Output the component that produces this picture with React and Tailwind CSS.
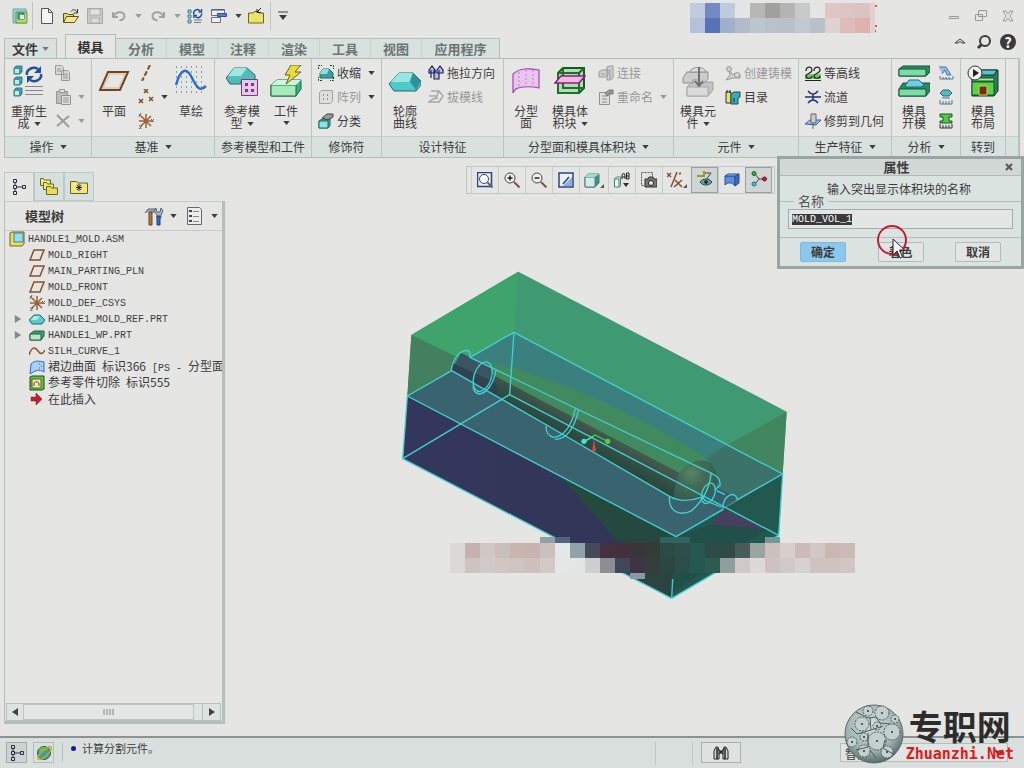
import React, { useEffect, useRef } from 'react';

const Caret = ({ className = 'text-[#3c3c3c]' }) => (
  <svg viewBox="0 0 8 5" className={`w-[7px] h-[4px] shrink-0 inline-block ${className}`}>
    <path d="M0 0h8L4 5z" fill="currentColor" />
  </svg>
);

const Icon = ({ size = 'w-4 h-4', box = 16, children }) => (
  <svg viewBox={`0 0 ${box} ${box}`} className={`${size} shrink-0`} fill="none" stroke="#3c3c3c">
    {children}
  </svg>
);

const Big = ({ children }) => <Icon size="w-8 h-8" box={32}>{children}</Icon>;

/* ---- quick access icons ---- */
const AppIcon = () => (
  <Icon>
    <path d="M1 1h13v14H1z" fill="#8fd0dc" stroke="#6aa6a6" />
    <path d="M4 4h11v11H4z" fill="#b9d86a" stroke="#6f9a3c" />
    <path d="M6 5h6v6H6z" fill="#48a0a8" stroke="#2e7478" />
    <path d="M8 7h4v4H8z" fill="#d6eef0" stroke="none" />
  </Icon>
);
const NewIcon = () => <Icon><path d="M2.500 .5h7l4 4v11h-11zM9.500 .5v4h4" fill="#f4f4f4" stroke="#555" /></Icon>;
const OpenIcon = () => (
  <Icon>
    <path d="M.5 14.500v-9h4l1 1h5v2" fill="#e4d96a" stroke="#5c5420" />
    <path d="M.5 14.500l3-6h12l-4 6z" fill="#f0e98a" stroke="#5c5420" />
    <path d="M8 3.500c2-3 5-2 6 1M14.500 1v4h-4" stroke="#333" />
  </Icon>
);
const SaveIcon = () => (
  <Icon>
    <path d="M.5 .5h15v15H.5z" fill="#c9c9c9" stroke="#a8a8a8" />
    <path d="M3 1h10v6H3z" fill="#e2e2e2" stroke="#b0b0b0" />
    <path d="M4 10h8v5H4z" fill="#dcdcdc" stroke="#b0b0b0" />
  </Icon>
);
const UndoIcon = () => <Icon><path d="M2 4v5h5M2.500 8.500C5 3 13 3 13.500 8c0 3-2 4-5 4.500" stroke="#a3a3a3" strokeWidth="2" /></Icon>;
const RedoIcon = () => <Icon><path d="M14 4v5H9M13.500 8.500C11 3 3 3 2.500 8c0 3 2 4 5 4.500" stroke="#a3a3a3" strokeWidth="2" /></Icon>;
const RegenSmall = () => (
  <Icon>
    <path d="M1 2h3v3H1zM1 7h3v3H1zM1 12h3v3H1z" fill="#8fdde0" stroke="#3c7f86" />
    <path d="M7 6.500a3.500 3.500 0 016-3.500M14.500 1v3h-3M14.500 5.500a3.500 3.500 0 01-6 3M7 10V7.500h3" stroke="#20509c" strokeWidth="1.500" />
    <path d="M7 12h8M7 14.500h7" stroke="#777" />
  </Icon>
);
const WindowsIcon = () => (
  <Icon>
    <path d="M.5 1.500h13v6H.5z" fill="#f0f0f0" stroke="#6b7080" />
    <path d="M6.500 5.500h9v3h-9z" fill="#5a80c8" stroke="#37508c" />
    <path d="M.5 14.500v-5h9v5z" fill="#f0f0f0" stroke="#6b7080" />
    <path d="M1 2h12" stroke="#37508c" />
  </Icon>
);
const CloseFolder = () => (
  <Icon>
    <path d="M.5 15v-10h5l1-1.500h4l1 1.500h4v10z" fill="#ece26a" stroke="#6c6424" />
    <path d="M13 0L9 4M9 1v3.500h4" stroke="#222" />
  </Icon>
);

/* ---- large ribbon icons ---- */
const RegenIcon = () => (
  <Big>
    <path d="M1 3l2-2h6v6l-2 2H1zM1 14l2-2h6v6l-2 2H1zM1 25l2-2h6v6l-2 2H1z" fill="#3c9ca4" stroke="#3c7f86" />
    <path d="M1.500 3.500h5v5h-5zM1.500 14.500h5v5h-5zM1.500 25.500h5v5h-5z" fill="#b8f0f0" stroke="#4c8f96" />
    <path d="M14 10a7 6 0 0111-6M28 9a7 6 0 01-11 6" stroke="#20509c" strokeWidth="2.500" />
    <path d="M28 1v7h-7zM14 18v-7h7z" fill="#20509c" stroke="none" />
    <path d="M12 21.500h18M12 25.500h18M12 29.500h18" stroke="#888" />
  </Big>
);
const PlaneIcon = () => (
  <Big>
    <path d="M10 7h20l-8 18H2z" stroke="#6b4420" strokeWidth="2" />
    <path d="M12 9h15l-6 14H5z" stroke="#d8b890" />
  </Big>
);
const SketchIcon = () => (
  <Big>
    {[2, 7, 12, 17, 22, 27].map((y) => (
      <path key={y} d={`M1 ${y}h30`} stroke="#3a4a80" strokeWidth="1" strokeDasharray="1 4" />
    ))}
    <path d="M1 20C6 2 12 3 17 13s8 14 14 8" stroke="#2a70c8" strokeWidth="2.500" />
  </Big>
);
const RefModelIcon = () => (
  <Big>
    <path d="M0 13L8 3h13l8 7v6H15v3H4z" fill="#52bcbc" stroke="#22686c" />
    <path d="M8 3h13l-6 8H2z" fill="#a0e8e4" stroke="none" />
    <path d="M15.500 14.500h16v16h-16z" fill="#e6c8e8" stroke="#7a3a80" />
    <path d="M19 18h3v3h-3zM25 18h3v3h-3zM19 24h3v3h-3zM25 24h3v3h-3z" fill="#7a3a80" stroke="none" />
  </Big>
);
const WorkIcon = () => (
  <Big>
    <path d="M1 20l6-5h24v9l-5 7H1z" fill="#3cae80" stroke="#1e6848" />
    <path d="M1 20h25v11H1z" fill="#a4ecb8" stroke="#1e6848" />
    <path d="M1 20l6-5h24l-5 5z" fill="#d0f4dc" stroke="none" />
    <path d="M21 0h10l-6 7h6L16 19l4-9h-5z" fill="#e8dc3c" stroke="#6c6418" />
  </Big>
);
const SilhouetteIcon = () => (
  <Big>
    <path d="M0 19L10 8h14l8 8v4l-5 6H5z" fill="#50c8c8" stroke="#1d6c74" />
    <path d="M10 8h14l-4 9H2z" fill="#96e6e2" stroke="none" />
    <path d="M24 8l8 8-5 9-6-8z" fill="#2c9498" stroke="none" />
  </Big>
);
const PartSurfIcon = () => (
  <Big>
    <path d="M3 9C10 3 18 3 29 5v18c-9-2-17-1-21 0-3 1-4 2-5 5z" fill="#e8c4ee" stroke="#a048b0" strokeWidth="1.200" />
    <path d="M9 7v15M16 5v17M23 5v17" stroke="#c47ccc" strokeDasharray="2 2" />
  </Big>
);
const VolumeIcon = () => (
  <Big>
    <path d="M4 8l5-5h21v20l-5 5H4z" fill="#b8d8bc" stroke="#155c20" strokeWidth="2" />
    <path d="M4 8h21v20H4zM25 8l5-5M9 3v20h21" stroke="#1c7028" strokeWidth="2" />
    <path d="M1 18l6-7h24l-6 7z" fill="#f0b8e4" stroke="#8a2078" strokeWidth="1.500" />
  </Big>
);
const MoldCompIcon = () => (
  <Big>
    <path d="M5 22l5-5h21v8l-5 6H5z" fill="#c4c4c4" stroke="#a0a0a0" />
    <path d="M5 22h21v9H5z" fill="#dadada" stroke="#a8a8a8" />
    <path d="M1 13l4-6h21v7l-4 4H17v-3h-6v3H1z" fill="#cccccc" stroke="#909090" />
    <path d="M8 7c0-5 14-7 16 0z" fill="#dedede" stroke="#909090" />
    <path d="M17 2v18M13 16l4 5 4-5" stroke="#707070" strokeWidth="2" />
  </Big>
);
const MoldOpenIcon = () => (
  <Big>
    <path d="M1 4l4-3h27v6l-4 4H1z" fill="#2f8a60" stroke="#155038" />
    <path d="M1 4h27v7H1z" fill="#7cdca4" stroke="#155038" />
    <path d="M1 24l4-6h27v8l-4 5H1z" fill="#2f8a60" stroke="#155038" />
    <path d="M1 24h27v7H1z" fill="#7cdca4" stroke="#155038" />
    <path d="M7 21l4-6h10l5 5-3 2H9z" fill="#6cd0e0" stroke="#1c6c80" />
  </Big>
);
const MoldLayoutIcon = () => (
  <Big>
    <path d="M5 12l4-7h22v21l-4 5H5z" fill="#2c7c58" stroke="#123828" />
    <path d="M12 5h18l-3 5H12z" fill="#58c4d4" stroke="#123828" />
    <path d="M5 17h22v13H5z" fill="#5cd04c" stroke="#125820" />
    <path d="M12 21h8v9h-8z" fill="#702c1c" stroke="#e8d040" />
    <path d="M5 13h22v3H5z" fill="#a8e8a0" stroke="#125820" />
    <circle cx="8" cy="8" r="7" fill="#f0f0f0" stroke="#333" />
    <path d="M6 4l6 4-6 4z" fill="#222" stroke="none" />
  </Big>
);

/* ---- small ribbon icons ---- */
const CopyIcon = () => <Icon><path d="M.5 .5h6l2 2v7h-8zM6.500 5.500h6l2 2v8h-8zM8 9h5M8 11h5M8 13h5M2 4h4M2 6h4" fill="#dadada" stroke="#9a9a9a" /></Icon>;
const PasteIcon = () => <Icon><path d="M1.500 2.500h11v12h-11z" fill="#bcbcbc" stroke="#959595" /><path d="M4.500 .5h5v3h-5zM6.500 6.500h9v9h-9zM8 9h6M8 11h6M8 13h6" fill="#e0e0e0" stroke="#959595" /></Icon>;
const DeleteIcon = () => <Icon><path d="M2 2l12 12M14 3L2 13" stroke="#9c9c9c" strokeWidth="2" /></Icon>;
const AxisIcon = () => <Icon><path d="M12 0L4 16" stroke="#84502c" strokeWidth="2" strokeDasharray="5 2" /></Icon>;
const PointIcon = () => <Icon><path d="M6 0l4 4M10 0L6 4M1 10l4 4M5 10l-4 4M11 8l4 4M15 8l-4 4" stroke="#84502c" strokeWidth="1.500" /></Icon>;
const CsysIcon = () => (
  <Icon>
    <path d="M1 8h14M8 1v14M3 3l10 10M13 3L3 13" stroke="#9a6038" strokeWidth="1.500" />
    <path d="M1 1l2 2M3 0L1 4M13 6l3 3M16 6l-3 3M1 13h3l-3 3h3" stroke="#666" />
  </Icon>
);
const ShrinkIcon = () => (
  <Icon>
    <path d="M2 8l3-4h6l4 4v5H2z" fill="#3c9ca0" stroke="#22686c" />
    <path d="M2 8l3-4h6l-2 5H2z" fill="#8ce0dc" stroke="none" />
    <path d="M.5 4V.5H4M12 .5h3.500V4M15.500 12v3.500H12M4 15.500H.5V12" stroke="#333" strokeDasharray="2 1" />
  </Icon>
);
const PatternIcon = () => <Icon><path d="M1.500 3.500l2-2h11v11l-2 2h-11z" fill="#dedede" stroke="#a4a4a4" /><path d="M5 6h1M9 6h1M5 10h1M9 10h1" stroke="#909090" strokeWidth="2" /></Icon>;
const ClassifyIcon = () => <Icon><path d="M1 8l3-2h8v7l-2 2H1z" fill="#3ca8a0" stroke="#22686c" /><path d="M1 8h9v7H1z" fill="#88e4dc" stroke="#22686c" /><path d="M4 5l5-4h6v3l-5 3z" fill="#989898" stroke="#444" /></Icon>;
const DragDirIcon = () => <Icon><path d="M3 5v8M6 5v9h5V5M1 5l3-4 3 4v3H1zM9 5l3-4 3 4v3H9z" fill="#b8b8e4" stroke="#20205c" strokeWidth="1.200" /></Icon>;
const DraftIcon = () => <Icon><path d="M3 2h8l4 5-4 6H1l4-3 5-1M1 7h8M11 2L8 9" stroke="#a8a8a8" strokeWidth="1.500" /></Icon>;
const ConnectIcon = () => <Icon><path d="M1 7l3-2h6v5l-3 2H1zM9 2l3-1h3v12l-3 2H9z" fill="#d0d0d0" stroke="#989898" /><path d="M12 4v10M3 9h4" stroke="#989898" /></Icon>;
const RenameIcon = () => <Icon><path d="M1.500 3.500h10v12h-10zM4 7h5M4 10h5M4 13h5" fill="#e0e0e0" stroke="#909090" /><path d="M7 4l4-3h4v4h-3l-3 2z" fill="#999" stroke="#777" /></Icon>;
const CastIcon = () => <Icon><path d="M4 5l3 4h8v4H8L1 15l4-5z" fill="#d0d0d0" stroke="#999" /><circle cx="4" cy="4" r="2.500" fill="#d0d0d0" stroke="#999" /><circle cx="12" cy="10" r="2.500" fill="#dcdcdc" stroke="#999" /></Icon>;
const CatalogIcon = () => (
  <Icon>
    <path d="M1 3h5v11H1z" fill="#e8e070" stroke="#333" />
    <path d="M6 5l3-2h6v5l-2 1v6H6z" fill="#40a8b0" stroke="#1c4c54" />
    <path d="M2 1v3M5 1v3M9 9v4" stroke="#222" />
  </Icon>
);
const ContourIcon = () => (
  <Icon>
    <path d="M0 9h16v5H0z" fill="#70c860" stroke="none" />
    <path d="M1 6c0-5 6-5 6-1s-6 3-6 6 6 3 6 0M9 6c0-5 6-5 6-1s-6 3-6 6 6 3 6 0M0 15.500h16" stroke="#222" strokeWidth="1.200" />
  </Icon>
);
const RunnerIcon = () => <Icon><path d="M0 8h16M3 2c3 4 7 4 10 0M3 14c3-4 7-4 10 0M8 5v6" stroke="#20306c" strokeWidth="1.500" /></Icon>;
const TrimIcon = () => <Icon><path d="M0 11l5-4h11l-5 5z" fill="#a0c0ec" stroke="#3a5c9c" /><path d="M6 1h5v9H6zM8 10v6" fill="#cccccc" stroke="#666" /></Icon>;
const DraftCheck = () => <Icon><path d="M1 2h7l5 8H9L7 5 4 9" fill="#98bce4" stroke="#4a74b0" /><path d="M2 11v3h13v-3M5 12v2M8 12v2M11 12v2" stroke="#56748c" /></Icon>;
const ThickCheck = () => <Icon><path d="M2 4l3-3h6l3 3-3 3H5z" fill="#58b8c0" stroke="#246870" /><path d="M2 11v4h12v-4M5 12v3M8 12v3M11 12v3M4 9h8" stroke="#56748c" /></Icon>;
const InterfCheck = () => <Icon><path d="M2 1h12v3H11v4h3v2H2V8h3V4H2z" fill="#58c848" stroke="#125820" /><path d="M2 11v4h12v-4M5 12v3M8 12v3M11 12v3" stroke="#333" /></Icon>;

/* ---- tree icons ---- */
const TreeTabIcon = () => <Icon><path d="M2.500 .5h3v3h-3zM2.500 6.500h3v3h-3zM2.500 12.500h3v3h-3zM11.500 6.500h3v3h-3zM4 4v2M4 10v2M6 8h5" stroke="#2a2c44" /></Icon>;
const FoldersIcon = () => (
  <Icon size="w-5 h-5" box={20}>
    <path d="M1.500 8.500v-7h3l1 1.500h6v5.500z" fill="#f0e880" stroke="#6c6424" />
    <path d="M4.500 12.500v-7h3l1 1.500h6v5.500z" fill="#f0e880" stroke="#6c6424" />
    <path d="M7.500 17.500v-8h4l1 1.500h6v6.500z" fill="#e8dc60" stroke="#6c6424" />
  </Icon>
);
const FavIcon = () => (
  <Icon size="w-5 h-5" box={20}>
    <path d="M1.500 16.500v-12h6l1.500 1.500h9.500v10.500z" fill="#f0e878" stroke="#6c6424" />
    <path d="M10 7v7M7 10.500h6M8 8l4 5M12 8l-4 5" stroke="#20206c" />
  </Icon>
);
const ToolsIcon = () => (
  <Icon size="w-5 h-5" box={20}>
    <path d="M1 7l3-4h7v3H7" fill="#9ab" stroke="#567" />
    <path d="M5 6h3v13H5z" fill="#b07840" stroke="#6c4420" />
    <path d="M12 2l1 4h3l1-4 2 3-2 4v3h-4V9l-3-4z" fill="#a8b8c4" stroke="#567" />
    <path d="M13 10h3v9h-3z" fill="#3868c0" stroke="#204080" />
  </Icon>
);
const SettingsIcon = () => <Icon size="w-5 h-5" box={20}><path d="M2.500 1.500h12l2 2v15h-14z" fill="#ececec" stroke="#667" /><path d="M4 5h3M4 10h3M4 15h3" stroke="#444" strokeWidth="2" /><path d="M8 5.500h6M8 10.500h6M8 15.500h6" stroke="#888" /></Icon>;
const AsmIcon = () => <Icon><path d="M1 2l2-1h12v12l-2 2H1z" fill="#e8dc60" stroke="#6c6424" /><path d="M5 2h9v9H5z" fill="#98dcec" stroke="#3c8494" /></Icon>;
const TreePlane = () => <Icon><path d="M5 3h10l-4 10H1z" stroke="#84502c" strokeWidth="1.500" /></Icon>;
const RefPart = () => <Icon><path d="M0 9l5-5h6l5 5-3 4H3z" fill="#58c8c8" stroke="#22686c" /><path d="M5 5h6l-3 4H2z" fill="#a8ece8" stroke="none" /></Icon>;
const WpPart = () => <Icon><path d="M1 7l4-3h10v5l-3 4H1z" fill="#3c9c78" stroke="#245c48" /><path d="M1 7h11v6H1z" fill="#b4e8c8" stroke="#245c48" /></Icon>;
const CurveIcon = () => <Icon><path d="M0 12C3 3 6 4 9 8s5 3 7-1" stroke="#84502c" strokeWidth="1.500" /></Icon>;
const SkirtIcon = () => <Icon><path d="M2 5c4-4 8-3 13-2v10c-5-3-8-2-14 2z" fill="#a8d0f4" stroke="#3a68b0" /><path d="M10 5h1M12 7h1M10 9h1" stroke="#3a68b0" /></Icon>;
const CutIcon = () => <Icon><path d="M1 2l2-1h12v13l-2 1H1z" fill="#58c848" stroke="#184c18" /><path d="M3 4h9v9H3z" fill="#e8f0b0" stroke="#6c5424" /><path d="M5 11V9c0-3 5-3 5 0v2" stroke="#6c3420" /></Icon>;
const InsertIcon = () => <Icon><path d="M2 6h5V2l6 6-6 6v-4H2z" fill="#c02030" stroke="#801018" strokeWidth=".5" /></Icon>;

/* ---- graphics toolbar icons ---- */
const Lens = ({ sign }) => (
  <Icon>
    <circle cx="6" cy="6" r="5" fill="#f2f2f2" stroke="#444" />
    <path d="M10 10l5.500 5.500" stroke="#7a5838" strokeWidth="2" />
    <path d={sign} stroke="#222" strokeWidth="1.500" />
  </Icon>
);
const FitIcon = () => (
  <Icon>
    <path d="M.5 .5h14v14H.5z" fill="#e4ecf8" stroke="#2c4480" strokeWidth="1.500" />
    <circle cx="7" cy="7" r="4.500" fill="#fff" stroke="#445" />
    <path d="M10.500 10.500l5 5" stroke="#665" strokeWidth="2" />
  </Icon>
);
const RepaintIcon = () => <Icon><path d="M1 1h14v14H1z" fill="#e8f0fc" stroke="#2c4480" strokeWidth="1.500" /><path d="M14 14V5L5 14z" fill="#88b0e0" stroke="none" /><path d="M5 12l6-7" stroke="#345" strokeWidth="1.500" /></Icon>;
const ShadeIcon = () => <Icon><path d="M1 5l3-3h11v9l-4 4H1z" fill="#3c948c" stroke="#4c7c78" /><path d="M1 5h10v10H1z" fill="#d4ece8" stroke="#4c7c78" /><path d="M1 5l3-3h11l-4 3z" fill="#a0dcd4" stroke="none" /></Icon>;
const SavedViewIcon = () => (
  <Icon>
    <path d="M.5 7l2-2h4v8l-1 2H.5zM.5 7H5v8" fill="#e8f4f4" stroke="#4c7c78" />
    <path d="M8 7V3l1.500-2L11 3v4M8 5h3M12.500 1v6h2.500V1zM12.500 4H15" stroke="#222" />
    <path d="M9 11h6l-3 4z" fill="#333" stroke="none" />
  </Icon>
);
const CameraIcon = () => <Icon><path d="M.5 .5h11v13H.5z" fill="#e4e4e4" stroke="#555" strokeDasharray="2 1" /><path d="M4 7h3l1-2h4l1 2h3v8H4z" fill="#777" stroke="#333" /><circle cx="10" cy="11" r="2.500" fill="#eee" stroke="#222" /></Icon>;
const DatumIcon = () => <Icon><path d="M0 1l4 4M4 1L0 5M10 0L4 15M8 8l7 7M15 8l-8 7M12 2l2-1" stroke="#84502c" strokeWidth="1.500" /></Icon>;
const AnnoIcon = () => <Icon><path d="M0 5h7V0" stroke="#a09820" strokeWidth="2" /><path d="M8 2h6l-5 7" stroke="#444" /><path d="M3 11c3-4 9-4 12 0-3 4-9 4-12 0z" fill="#58a8a0" stroke="#224848" /><circle cx="9" cy="11" r="1.500" fill="#222" /></Icon>;
const SpinIcon = () => <Icon><path d="M1 4h10v10c-3-4-7-4-10-1z" fill="#5c90dc" stroke="#2c4c90" /><path d="M11 4l4-2v9l-4 3z" fill="#3c68b8" stroke="#2c4c90" /><path d="M4 2h11l-4 2H1z" fill="#98c0f0" stroke="#2c4c90" /></Icon>;
const NodesIcon = () => (
  <Icon>
    <path d="M4 3l4 5-4 5M8 8h5" stroke="#444" />
    <circle cx="3" cy="2.500" r="2" fill="#38b838" stroke="#186018" />
    <circle cx="3" cy="13" r="2" fill="#48c8d8" stroke="#187080" />
    <circle cx="13.500" cy="8" r="2" fill="#c82838" stroke="#701018" />
  </Icon>
);

/* ---- ribbon pieces ---- */
const BigButton = ({ icon, lines, arrow, width }) => (
  <button className={`flex flex-col items-center shrink-0 pt-1.5 ${width}`}>
    {icon}
    <span className="mt-2 text-xs leading-3 whitespace-nowrap">
      {lines.map((line, i) => (
        <span key={line} className="block text-center">
          {line}
          {arrow && i === lines.length - 1 && lines.length > 1 && <Caret className="ml-1 mb-0.5 text-[#3c3c3c]" />}
        </span>
      ))}
    </span>
    {arrow && lines.length === 1 && <Caret className="mt-1 text-[#3c3c3c]" />}
  </button>
);

const SmallButton = ({ icon, label, arrow, disabled, name }) => (
  <button
    aria-label={name}
    disabled={disabled}
    className={`flex items-center h-6 gap-[3px] text-xs whitespace-nowrap ${disabled ? 'text-[#999]' : ''}`}
  >
    {icon}
    {label && <span>{label}</span>}
    {arrow && <Caret className={`ml-1 ${disabled ? 'text-[#999]' : 'text-[#3c3c3c]'}`} />}
  </button>
);

const Stack = ({ children, className = '' }) => (
  <div className={`flex flex-col items-start pt-0.5 shrink-0 ${className}`}>{children}</div>
);

const Group = ({ title, arrow, width, children }) => (
  <section className={`flex flex-col border-r border-[#bcc4c2] ${width}`}>
    <div className="flex h-[77px]">{children}</div>
    <h2 className="flex items-center justify-center gap-1.5 h-[21px] text-xs whitespace-nowrap border-t border-[#c4cccc] bg-[#d9e1df]">
      {title}
      {arrow && <Caret />}
    </h2>
  </section>
);

const Ribbon = () => (
  <div className="flex mx-1 border border-[#b4bcba] bg-[#e6e6e5]">
    <Group title="操作" arrow width="w-[87px]">
      <BigButton icon={<RegenIcon />} lines={['重新生', '成']} arrow width="w-[48px]" />
      <Stack className="pl-0.5">
        <SmallButton icon={<CopyIcon />} name="复制" disabled />
        <SmallButton icon={<PasteIcon />} name="粘贴" arrow disabled />
        <SmallButton icon={<DeleteIcon />} name="删除" arrow disabled />
      </Stack>
    </Group>
    <Group title="基准" arrow width="w-[123px]">
      <BigButton icon={<PlaneIcon />} lines={['平面']} width="w-[44px]" />
      <Stack className="pl-0.5">
        <SmallButton icon={<AxisIcon />} name="轴" />
        <SmallButton icon={<PointIcon />} name="点" arrow />
        <SmallButton icon={<CsysIcon />} name="坐标系" />
      </Stack>
      <BigButton icon={<SketchIcon />} lines={['草绘']} width="w-[46px]" />
    </Group>
    <Group title="参考模型和工件" width="w-[97px]">
      <BigButton icon={<RefModelIcon />} lines={['参考模', '型']} arrow width="w-[54px]" />
      <BigButton icon={<WorkIcon />} lines={['工件']} arrow width="w-[34px]" />
    </Group>
    <Group title="修饰符" width="w-[70px]">
      <Stack className="pl-[6px]">
        <SmallButton icon={<ShrinkIcon />} label="收缩" arrow />
        <SmallButton icon={<PatternIcon />} label={<span className="text-[#999]">阵列</span>} arrow />
        <SmallButton icon={<ClassifyIcon />} label="分类" />
      </Stack>
    </Group>
    <Group title="设计特征" width="w-[122px]">
      <BigButton icon={<SilhouetteIcon />} lines={['轮廓', '曲线']} width="w-[46px]" />
      <Stack>
        <SmallButton icon={<DragDirIcon />} label="拖拉方向" />
        <SmallButton icon={<DraftIcon />} label="拔模线" disabled />
      </Stack>
    </Group>
    <Group title="分型面和模具体积块" arrow width="w-[170px]">
      <BigButton icon={<PartSurfIcon />} lines={['分型', '面']} width="w-[44px]" />
      <BigButton icon={<VolumeIcon />} lines={['模具体', '积块']} arrow width="w-[44px]" />
      <Stack className="pl-[6px]">
        <SmallButton icon={<ConnectIcon />} label="连接" disabled />
        <SmallButton icon={<RenameIcon />} label="重命名" arrow disabled />
      </Stack>
    </Group>
    <Group title="元件" arrow width="w-[125px]">
      <BigButton icon={<MoldCompIcon />} lines={['模具元', '件']} arrow width="w-[48px]" />
      <Stack className="pl-[3px]">
        <SmallButton icon={<CastIcon />} label="创建铸模" disabled />
        <SmallButton icon={<CatalogIcon />} label="目录" />
      </Stack>
    </Group>
    <Group title="生产特征" arrow width="w-[93px]">
      <Stack className="pl-[6px]">
        <SmallButton icon={<ContourIcon />} label="等高线" />
        <SmallButton icon={<RunnerIcon />} label="流道" />
        <SmallButton icon={<TrimIcon />} label="修剪到几何" />
      </Stack>
    </Group>
    <Group title="分析" arrow width="w-[69px]">
      <BigButton icon={<MoldOpenIcon />} lines={['模具', '开模']} width="w-[44px]" />
      <Stack className="pl-0.5">
        <SmallButton icon={<DraftCheck />} name="拔模检测" />
        <SmallButton icon={<ThickCheck />} name="厚度检查" />
        <SmallButton icon={<InterfCheck />} name="投影面积" />
      </Stack>
    </Group>
    <Group title="转到" width="w-[45px]">
      <BigButton icon={<MoldLayoutIcon />} lines={['模具', '布局']} width="w-[44px]" />
    </Group>
    <Group title="" width="flex-1" />
  </div>
);

const Divider = () => <span className="block w-px h-7 bg-[#c0c6c4]" />;

const titleCells = [
  ['#c0ccde', '#7389c4', '#bfcbdc', '#e4e6e6', '#b7b7b6', '#a0a19e', '#b3b4b3', '#c8caca', '#e4e5e4', '#dfc6c5', '#dcc5c4', '#dcc2c1'],
  ['#b4c1d8', '#5872b6', '#a2afc9', '#b3bbc9', '#bcc6cc', '#bac1cb', '#b9c0ca', '#c1c8d2', '#b9c0c6', '#e0d2d1', '#dfbcbb', '#ddb2b0'],
];

const TitleMosaic = () => (
  <svg viewBox="0 0 188 30" className="w-[188px] h-[30px]" shapeRendering="crispEdges">
    {titleCells.map((row, r) =>
      row.map((c, i) => <rect key={`${r}-${i}`} x={i * 15} y={r * 15} width="15" height="15" fill={c} />)
    )}
    <path d="M180 0h5v30h-5z" fill="#e6d0cf" />
    <path d="M185 2h2v2h-2zM185 22h2v2h-2zM185 27h1v2h-1z" fill="#c86060" />
  </svg>
);

const QuickAccess = () => (
  <header className="flex items-center h-8 pl-3 pr-2.5">
    <div className="flex items-center flex-1">
      <AppIcon />
      <span className="ml-1 mr-1.5"><Divider /></span>
      <button aria-label="新建" className="mr-2"><NewIcon /></button>
      <button aria-label="打开" className="mr-2"><OpenIcon /></button>
      <button aria-label="保存" className="mr-2"><SaveIcon /></button>
      <button aria-label="撤消" className="flex items-center gap-2 mr-2"><UndoIcon /><Caret className="text-[#999]" /></button>
      <button aria-label="重做" className="flex items-center gap-2 mr-1.5"><RedoIcon /><Caret className="text-[#999]" /></button>
      <button aria-label="重新生成" className="mr-2"><RegenSmall /></button>
      <button aria-label="窗口" className="flex items-center gap-2 mr-1.5"><WindowsIcon /><Caret /></button>
      <button aria-label="关闭窗口"><CloseFolder /></button>
      <span className="mx-1.5"><Divider /></span>
      <button aria-label="自定义">
        <Icon size="w-3 h-3" box={12}><path d="M1 2h10" /><path d="M2 5h8l-4 5z" fill="#3c3c3c" stroke="none" /></Icon>
      </button>
    </div>
    <div className="pt-1 mr-[70px]"><TitleMosaic /></div>
    <div className="flex items-center gap-[15px]">
      <button aria-label="最小化"><Icon size="w-3 h-3" box={12}><path d="M1.500 6.500h9v2h-9z" stroke="#999" /></Icon></button>
      <button aria-label="还原"><Icon size="w-3 h-3" box={12}><path d="M3.500 .5h8v6h-8zM.5 4.500h7v6h-7z" stroke="#999" /></Icon></button>
      <button aria-label="关闭"><Icon size="w-3 h-3" box={12}><path d="M1 1h3l2 3 2-3h3L8 6l3 5H8L6 8l-2 3H1l3-5z" stroke="#999" /></Icon></button>
    </div>
  </header>
);

const tabs = ['分析', '模型', '注释', '渲染', '工具', '视图'];

const TabBar = () => (
  <nav className="flex items-end pl-1 pr-2 h-[26px] text-[13px] font-bold text-[#6c7472]">
    <button className="flex items-center justify-center gap-1 w-[53px] h-5 bg-[#d9e1df] border border-b-0 border-[#b4bcba] text-[#3c3c3c]">
      文件 <Caret className="text-[#777]" />
    </button>
    <button className="w-[51px] h-6 ml-2 border border-b-0 border-[#b4bcba] bg-[#e6e6e5] text-[#333]">模具</button>
    <div className="flex h-5 border-t border-r border-[#b4bcba] bg-[#d9e1df]">
      {tabs.map((t) => (
        <button key={t} className="w-[51px] h-[19px] border-r border-[#ccd4d2]">{t}</button>
      ))}
      <button className="w-[77px] h-[19px]">应用程序</button>
    </div>
    <div className="flex items-center gap-2 h-7 ml-auto pb-1">
      <button aria-label="最小化功能区" className="mr-0.5"><Icon size="w-3 h-3" box={12}><path d="M1 7l5-4 5 4H8L6 5.500 4 7z" /></Icon></button>
      <button aria-label="搜索"><Icon><circle cx="9" cy="7" r="5" strokeWidth="2" /><path d="M6 10l-4 4" strokeWidth="3" /></Icon></button>
      <button aria-label="帮助" className="w-4 h-4 rounded-full bg-[#3a3a3a] text-white text-sm leading-4 font-bold">?</button>
    </div>
  </nav>
);

const mono = "font-['Liberation_Mono','Noto_Sans_CJK_SC',monospace] text-[10px]";

const treeItems = [
  { icon: <TreePlane />, label: 'MOLD_RIGHT' },
  { icon: <TreePlane />, label: 'MAIN_PARTING_PLN' },
  { icon: <TreePlane />, label: 'MOLD_FRONT' },
  { icon: <CsysIcon />, label: 'MOLD_DEF_CSYS' },
  { icon: <RefPart />, label: 'HANDLE1_MOLD_REF.PRT', open: true },
  { icon: <WpPart />, label: 'HANDLE1_WP.PRT', open: true },
  { icon: <CurveIcon />, label: 'SILH_CURVE_1' },
];

const featureItems = [
  { icon: <SkirtIcon />, name: '裙边曲面', id: '标识366', section: ' [PS - ', tail: '分型面' },
  { icon: <CutIcon />, name: '参考零件切除', id: '标识555' },
  { icon: <InsertIcon />, name: '在此插入' },
];

const ModelTree = () => (
  <aside className="flex flex-col w-[221px] ml-1 mt-3.5 mb-3 shrink-0">
    <div className="flex h-[29px]">
      <button aria-label="模型树" className="flex items-center justify-center w-[30px] border border-b-0 border-[#c0c8c6]"><TreeTabIcon /></button>
      <button aria-label="文件夹浏览器" className="flex items-center justify-center w-[30px] bg-[#d6e0de] border border-[#c0c8c6]"><FoldersIcon /></button>
      <button aria-label="收藏夹" className="flex items-center justify-center w-[30px] bg-[#d6e0de] border border-[#c0c8c6]"><FavIcon /></button>
    </div>
    <div className="flex flex-col flex-1 border-l border-r-[3px] border-b-[3px] border-[#b4bebc]">
      <div className="flex items-center h-[30px] pl-5 pr-1 border-t border-b border-[#c4cccc]">
        <h2 className="text-[13px] font-bold flex-1">模型树</h2>
        <button aria-label="设置" className="flex items-center gap-1.5 mr-2"><ToolsIcon /><Caret /></button>
        <button aria-label="显示" className="flex items-center gap-1.5"><SettingsIcon /><Caret /></button>
      </div>
      <ul className="flex-1 overflow-hidden">
        <li className={`flex items-center gap-[3px] h-4 pl-1 ${mono}`}><AsmIcon />HANDLE1_MOLD.ASM</li>
        {treeItems.map((item) => (
          <li key={item.label} className="flex items-center gap-[3px] h-4 pl-[9px] whitespace-nowrap">
            <svg viewBox="0 0 8 10" className="w-2 h-2 mr-1 shrink-0">{item.open && <path d="M0 0l8 5-8 5z" fill="#888" />}</svg>
            {item.icon}
            <span className={mono}>{item.label}</span>
          </li>
        ))}
        {featureItems.map((item) => (
          <li key={item.name} className="flex items-center gap-[3px] h-4 pl-6 whitespace-pre">
            {item.icon}
            <span className="text-xs leading-4">
              {item.name}
              {item.id && <span className={mono}> </span>}
              {item.id}
              {item.section && <span className={mono}>{item.section}</span>}
              {item.tail}
            </span>
          </li>
        ))}
      </ul>
      <div className="flex h-[18px] mx-px border border-[#b8c0be] bg-[#dde3e1]">
        <button aria-label="向左" className="flex items-center justify-center w-4"><svg viewBox="0 0 6 8" className="w-1.5 h-2"><path d="M6 0v8L0 4z" fill="#444" /></svg></button>
        <div className="flex items-center justify-center gap-px flex-1 mr-2 border border-[#bcc4c2] bg-[#e4e6e5]">
          {[0, 1, 2, 3].map((i) => <span key={i} className="w-0.5 h-1.5 bg-[#b0b6b4]" />)}
        </div>
        <button aria-label="向右" className="flex items-center justify-center w-[18px] border-l border-[#b8c0be]"><svg viewBox="0 0 6 8" className="w-1.5 h-2"><path d="M0 0v8l6-4z" fill="#444" /></svg></button>
      </div>
    </div>
  </aside>
);

const viewTools = [
  { name: '重新调整', icon: <FitIcon /> },
  { name: '放大', icon: <Lens sign="M3.500 6h5M6 3.500v5" /> },
  { name: '缩小', icon: <Lens sign="M3.500 6h5" /> },
  { name: '重画', icon: <RepaintIcon /> },
  { name: '显示样式', icon: <ShadeIcon />, more: true },
  { name: '已保存方向', icon: <SavedViewIcon /> },
  { name: '视图管理器', icon: <CameraIcon /> },
  { name: '基准显示', icon: <DatumIcon />, more: true },
  { name: '注释显示', icon: <AnnoIcon />, on: true },
  { name: '旋转中心', icon: <SpinIcon /> },
  { name: '3D 拖动器', icon: <NodesIcon />, on: true },
];

const ViewToolbar = () => (
  <div className="flex w-fit h-7 ml-[241px] mt-2 pl-1 pr-0.5 border border-[#c0c8c6]">
    {viewTools.map((t) => (
      <button
        key={t.name}
        aria-label={t.name}
        className={`flex items-end justify-center pb-[5px] ${t.on ? 'bg-[#cfd5d5] border border-[#98a0a0]' : 'border-l border-[#c8cecc]'} ${t.more ? 'w-[29px]' : 'w-[27px]'}`}
      >
        {t.icon}
        {t.more && <svg viewBox="0 0 4 4" className="w-1 h-1"><path d="M4 0v4H0z" fill="#555" /></svg>}
      </button>
    ))}
  </div>
);

// pixelated strip under the part, one colour per 45-unit cell
const stripRows = [
  ['#dbd8d7', '#c5b2ae', '#d1c8c6', '#cbbfbb', '#c9b5b0', '#c9b3ae', '#ccc0be', '#e2e9e8', '#8fa3a8', '#444a58', '#46303f', '#43303b', '#37373a', '#333c35', '#2d4a45', '#2d4f49', '#24594f', '#2e4c45', '#304b45', '#4a5c58', '#98a5a2', '#cdbfbd', '#d8cecc', '#ccbab7', '#d3c6c4', '#cab7b4', '#ccbab7'],
  ['#dcd8d6', '#cfc3c0', '#d2cac8', '#d1c6c4', '#d0c4c2', '#cfc0bd', '#d2cac8', '#e5e6e6', '#e4e6e5', '#d0cfcf', '#8b8f93', '#41465a', '#3f3444', '#33403a', '#2a4743', '#2d4d49', '#24594f', '#2f5a54', '#909f9d', '#d1c9c9', '#dcd9d8', '#cdc2c1', '#d0c9c8', '#d5d2d1', '#cfc3c2', '#cfc3c2', '#d2c6c4'],
];

const MoldModel = () => (
  <svg viewBox="0 0 1440 1035" className="w-[480px] h-[345px] ml-[165px] mt-[66px] shrink-0" role="img" aria-label="模具模型">
    <defs>
      <radialGradient id="tip" gradientUnits="userSpaceOnUse" cx="905" cy="640" r="95">
        <stop offset="0" stopColor="#568468" />
        <stop offset="0.4" stopColor="#436c56" />
        <stop offset="1" stopColor="#33594c" />
      </radialGradient>
      <linearGradient id="front" x1="0" y1="0" x2="1" y2="0">
        <stop offset="0" stopColor="#34375c" />
        <stop offset="1" stopColor="#303656" />
      </linearGradient>
      <linearGradient id="under" gradientUnits="userSpaceOnUse" x1="620" y1="510" x2="580" y2="580">
        <stop offset="0" stopColor="#44584f" />
        <stop offset="0.5" stopColor="#2f4d42" />
        <stop offset="1" stopColor="#22423a" />
      </linearGradient>
    </defs>
    <path d="M385 35L1190 455 1178 642 858 830 52 408 64 225z" fill="#3f9a73" />
    <path d="M385 35L64 225 190 292 240 290 372 217z" fill="#3ea46c" />
    <path d="M64 225L52 408 185 332 200 290z" fill="#44805f" />
    <path d="M1190 455L1178 642 1000 562z" fill="#42865f" />
    <path d="M372 217L1010 555 880 645 240 290z" fill="#3a807e" />
    <path d="M1010 553L1178 642 1040 720 960 700 880 645z" fill="#3b736b" />
    <path d="M185 332L880 645 1040 720 858 830 52 408z" fill="#3a6370" />
    <path d="M52 408L858 830 845 1015 38 596z" fill="url(#front)" />
    <path d="M510 648L858 830 845 1015 800 990 680 840z" fill="#24493f" />
    <path d="M680 840L858 832 845 1015 720 945z" fill="#2c4440" />
    <path d="M858 830L1178 642 1166 826 845 1015z" fill="#235850" />
    <path d="M960 795L1005 748 1130 808z" fill="#453f60" />
    <path d="M960 795L1130 808 845 1000 850 832z" fill="#21504a" />
    {/* handle: small pin, body, rounded end */}
    <path d="M212 278L330 332 330 415 185 332z" fill="#395560" />
    <path d="M190 310L330 375 330 415 185 332z" fill="#2f4450" />
    <path d="M300 312C380 315 440 350 520 375 680 440 860 530 950 598L985 640 940 690 870 645 310 350z" fill="#41895f" />
    <path d="M310 345L880 645 960 680 945 705 900 722 840 710 330 412z" fill="url(#under)" />
    <path d="M862 648C885 610 930 590 960 608 998 645 985 680 960 700 930 722 880 722 850 712z" fill="url(#tip)" />
    <path d="M975 680L1040 712 1000 745 940 712z" fill="#34606a" />
    <g fill="none" stroke="#45cfd0" strokeWidth="4" strokeLinejoin="round">
      <path d="M240 292L372 217 1178 642 1040 720M185 332L52 408 858 830 1000 748" />
      <path d="M52 408L38 596 845 1015 1166 826 1178 642M848 957L845 1015M372 217L359 404 38 596M359 404L1166 826" />
      <path d="M240 292L315 328 555 444 965 640M185 332L470 495 840 710" />
      <path d="M183 332C190 290 215 268 234 272 246 278 236 285 240 292" />
      <ellipse cx="278" cy="350" rx="26" ry="46" transform="rotate(18 278 350)" />
      <path d="M318 330C312 370 290 400 268 402 252 400 248 385 250 375" />
      <path d="M556 445C545 500 520 530 492 532 472 528 468 515 468 497M566 449C552 510 528 538 495 538" />
      <path d="M838 710C836 760 875 768 905 752 940 720 960 680 963 640 985 648 992 660 990 676L975 690" />
      <ellipse cx="955" cy="700" rx="19" ry="32" transform="rotate(20 955 700)" />
      <path d="M840 710C870 726 900 724 932 712M934 705l10 16 50 20M980 692l25 12M998 745C1000 705 1035 690 1042 718" />
    </g>
    <path d="M585 543L615 525 650 543" fill="none" stroke="#4cd040" strokeWidth="4" />
    <path d="M585 543L610 530" stroke="#50e0d0" strokeWidth="4" />
    <circle cx="582" cy="544" r="8" fill="#50e0d0" />
    <circle cx="653" cy="544" r="8" fill="#48d838" />
    <path d="M612 538l6 36h-12z" fill="#d84838" />
    <g shapeRendering="crispEdges">
      <path d="M450 830h45v19h-45z" fill="#8fa1a5" />
      <path d="M495 830h45v19h-45z" fill="#52657a" />
      <path d="M810 830h90v19h-90z" fill="#2f6462" />
      <path d="M1125 830h45v19h-45z" fill="#6f9a95" />
      <path d="M720 939h45v18h-45z" fill="#8b9aa2" />
      {stripRows.map((row, r) =>
        row.map((c, i) => <rect key={`${r}-${i}`} x={180 + i * 45} y={849 + r * 45} width="45" height="45" fill={c} />)
      )}
    </g>
  </svg>
);

const dialogButton = 'w-[46px] h-5 text-xs font-bold border rounded-xs';

const PropertyDialog = () => {
  const nameRef = useRef(null);

  useEffect(() => {
    nameRef.current.focus();
    nameRef.current.select();
  }, []);

  return (
    <div role="dialog" aria-labelledby="dlg-title" className="absolute right-0 top-[156px] w-[247px] border-[3px] border-[#9aa4a2] bg-[#dbe3e1]">
      <div className="flex items-center h-[17px] px-2 border-b border-[#b4bcba] bg-[#d2d8d6]">
        <h2 id="dlg-title" className="flex-1 text-[13px] font-bold text-center leading-4">属性</h2>
        <button aria-label="关闭"><Icon size="w-2 h-2" box={8}><path d="M1 1l6 6M7 1L1 7" strokeWidth="2" stroke="#555" /></Icon></button>
      </div>
      <p className="h-4 mt-px pl-[47px] text-xs leading-6 whitespace-nowrap">输入突出显示体积块的名称</p>
      <fieldset className="px-2 pb-2 border-y border-[#b4bcba]">
        <legend className="px-1 ml-1.5 text-[13px] leading-4 text-[#555]"><label htmlFor="vol-name">名称</label></legend>
        <input
          id="vol-name"
          ref={nameRef}
          defaultValue="MOLD_VOL_1"
          className={`block w-full h-5 px-[3px] border border-[#a4acaa] bg-[#e4e6e5] outline-none selection:bg-[#3a3a3a] selection:text-white ${mono}`}
        />
      </fieldset>
      <div className="flex justify-between px-5 pt-1 pb-1">
        <button className={`${dialogButton} bg-[#8cc8ec] border-[#80b8dc]`}>确定</button>
        <button className={`${dialogButton} bg-[#e2e5e4] border-[#b4bcba]`}>着色</button>
        <button className={`${dialogButton} bg-[#e2e5e4] border-[#b4bcba]`}>取消</button>
      </div>
      {/* click marker and pointer */}
      <svg viewBox="0 0 32 40" className="absolute left-[96px] top-[65px] w-8 h-10">
        <circle cx="16" cy="16" r="14" fill="none" stroke="#c02030" strokeWidth="2" />
        <path d="M17 15v16l4-4 3 7 2.500-1-3-7h5z" fill="#f4f4f4" stroke="#222" />
      </svg>
    </div>
  );
};

const StatusBar = () => (
  <footer className="flex items-start h-8 pt-1 pl-1.5 pr-4 border-t-2 border-[#8c9290] bg-[#d8dfdd]">
    <button aria-label="显示模型树" className="flex items-center justify-center w-[21px] h-[21px] border border-[#a4acaa] bg-[#ccd4d2]"><TreeTabIcon /></button>
    <button aria-label="浏览器" className="flex items-center justify-center w-[21px] h-[21px] ml-1.5 border border-[#b4bcba]">
      <Icon>
        <circle cx="8" cy="8" r="6.500" fill="#38a0a0" stroke="#1c6068" />
        <path d="M3 4c3-3 7-2 9 0-2 2-6 1-8 5z" fill="#68c048" stroke="none" />
        <path d="M2 14C0 11 12 0 15 2s-9 15-13 12z" stroke="#c0a828" strokeWidth="1.500" />
      </Icon>
    </button>
    <span className="w-px h-5 ml-2 bg-[#b8c0be]" />
    <p className="flex items-center flex-1 gap-1.5 pl-2 text-[11px] leading-3">
      <span className="w-[5px] h-[5px] rounded-full bg-[#1818a0]" />计算分割元件。
    </p>
    <span className="w-px h-6 bg-[#c0c8c6]" />
    <span className="w-px h-6 ml-9 bg-[#c0c8c6]" />
    <button aria-label="查找" className="flex items-center justify-center w-10 h-[21px] ml-2 border border-[#a8b0ae] bg-[#dfe2e1]">
      <Icon><path d="M1 14V6l2-4h2l1 4v8zM10 14V6l1-4h2l2 4v8z" fill="#d8d8d8" stroke="#222" /><path d="M4 3v11M12 3v11M6 5l4 4M10 5L6 9" stroke="#222" strokeWidth="1.500" /></Icon>
    </button>
    <select aria-label="选择过滤器" className="w-[168px] h-[19px] ml-[99px] mt-px border border-[#b4bcba] bg-[#e0e4e3] text-xs">
      <option>智能</option>
    </select>
  </footer>
);

// centres of the gear plates on the ball
const plates = [[18, 20, 7], [38, 9, 7], [48, 28, 8], [33, 37, 9], [8, 38, 5], [43, 48, 6], [20, 47, 6], [24, 7, 5], [33, 22, 4], [20, 33, 4], [51, 15, 4]];

const Watermark = () => (
  <div className="absolute right-2.5 bottom-1 flex items-center">
    <svg viewBox="0 0 60 60" className="w-[60px] h-[60px]">
      <defs>
        <radialGradient id="ball" cx="0.45" cy="0.35" r="0.65">
          <stop offset="0" stopColor="#d4e0de" />
          <stop offset="0.7" stopColor="#9cb0ae" />
          <stop offset="1" stopColor="#586c6a" />
        </radialGradient>
      </defs>
      <circle cx="30" cy="30" r="29" fill="url(#ball)" stroke="#5c6c6a" />
      {plates.map(([x, y, r]) => (
        <g key={`${x}-${y}`}>
          <circle cx={x} cy={y} r={r} fill="#c4d0ce" stroke="#4c5c5a" strokeDasharray="2 1" />
          <circle cx={x} cy={y} r="1" fill="#2c3a38" />
        </g>
      ))}
      <path d="M12 8l12 6 8-1 4 6 10 1M26 14l1 12-14 4-6-6M27 26l12-4M24 29v14l-12 3M41 36l-2 8 10 6M26 46l6 8" fill="none" stroke="#4c5c5a" />
    </svg>
    <div className="flex flex-col items-center ml-0.5">
      <span className="text-[34px] leading-10 font-bold text-[#2c2c2c]">专职网</span>
      <span className="font-['DejaVu_Sans_Mono',monospace] font-bold text-[15px] leading-4 text-[#e81818]">Zhuanzhi.Net</span>
    </div>
  </div>
);

const App = () => {
  return (
    <div className="relative flex flex-col min-h-screen overflow-hidden bg-[#e5e5e4] text-[#3c3c3c] font-['Noto_Sans_CJK_SC',sans-serif]">
      <QuickAccess />
      <TabBar />
      <Ribbon />
      <div className="flex flex-1">
        <ModelTree />
        <main className="flex flex-col flex-1">
          <ViewToolbar />
          <MoldModel />
        </main>
      </div>
      <StatusBar />
      <PropertyDialog />
      <Watermark />
    </div>
  );
};

export default App;
